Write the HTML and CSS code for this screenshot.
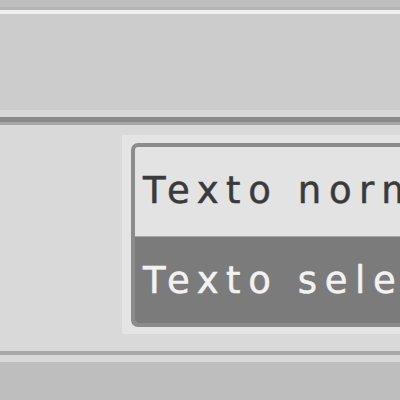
FILE: index.html
```html
<!DOCTYPE html>
<html lang="es">
<head>
    <meta charset="UTF-8">
    <title>Lista</title>
    <link rel="stylesheet" href="styles.css">
</head>
<body>
    <div class="topstrip"></div>
    <div class="toolbar"></div>
    <div class="content">
        <div class="frame">
            <div class="list">
                <div class="row">Texto normal</div>
                <div class="row selected">Texto seleccionado</div>
            </div>
        </div>
    </div>
    <div class="statusbar"></div>
</body>
</html>
```

FILE: styles.css
```css
* {
    box-sizing: border-box;
}

html, body {
    height: 100%;
}

body {
    margin: 0;
    background-color: #bebebe;
    overflow: hidden;
    font-family: 'DejaVu Sans', sans-serif;
}

.topstrip {
    height: 10px;
    border-bottom: 3px solid #b4b4b4;
}

.toolbar {
    height: 112px;
    background-color: #cccccc;
    border-top: 4px solid #f0f0f0;
    border-bottom: 5px solid #8a8a8a;
    box-shadow: inset 0 -7px 0 #d8d8d8;
}

.content {
    height: 229px;
    background-color: #d9d9d9;
    border-top: 3px solid #a6a6a6;
    padding: 10px 0 0 122px;
}

.frame {
    width: 400px;
    height: 199px;
    padding: 8px 0 7px 9px;
    background-color: #e4e4e4;
}

.list {
    height: 184px;
    border: 4px solid #8b8b8b;
    border-right: none;
    border-radius: 7px 0 0 7px;
    overflow: hidden;
    background-color: #e3e3e3;
}

.row {
    height: 89px;
    padding: 25px 0 0 8px;
    font-size: 37px;
    letter-spacing: 7.6px;
    line-height: 37px;
    color: #3a3a3a;
    -webkit-text-stroke: 0.5px #3a3a3a;
    white-space: nowrap;
}

.selected {
    height: 87px;
    border-top: 1px solid #a9a9a9;
    background-color: #7b7b7b;
    color: #f2f2f2;
    -webkit-text-stroke: 0.5px #f2f2f2;
}

.statusbar {
    height: 11px;
    background-color: #d8d8d8;
    border-top: 4px solid #a8a8a8;
}
```
